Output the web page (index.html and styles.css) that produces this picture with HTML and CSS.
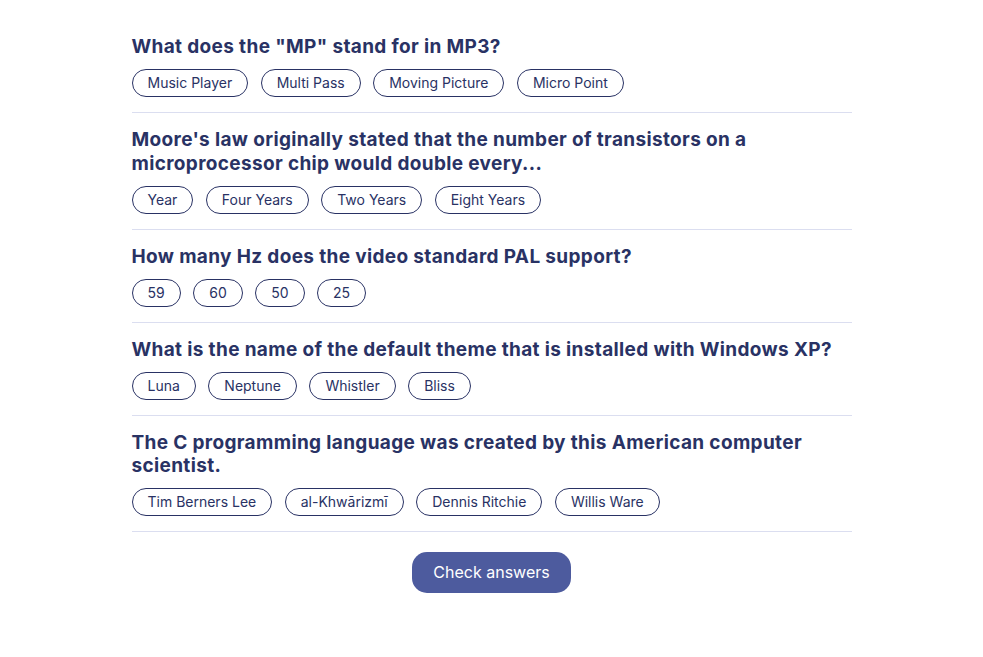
FILE: index.html
```html
<!DOCTYPE html>
<html lang="en">
<head>
<meta charset="utf-8">
<title>Quizzical</title>
<link rel="stylesheet" href="styles.css">
</head>
<body>
<main class="quiz">
  <section class="question">
    <h2 class="question-title">What does the "MP" stand for in MP3?</h2>
    <div class="answers">
      <button class="answer">Music Player</button>
      <button class="answer">Multi Pass</button>
      <button class="answer">Moving Picture</button>
      <button class="answer">Micro Point</button>
    </div>
  </section>
  <section class="question">
    <h2 class="question-title">Moore's law originally stated that the number of transistors on a microprocessor chip would double every...</h2>
    <div class="answers">
      <button class="answer">Year</button>
      <button class="answer">Four Years</button>
      <button class="answer">Two Years</button>
      <button class="answer">Eight Years</button>
    </div>
  </section>
  <section class="question">
    <h2 class="question-title">How many Hz does the video standard PAL support?</h2>
    <div class="answers">
      <button class="answer">59</button>
      <button class="answer">60</button>
      <button class="answer">50</button>
      <button class="answer">25</button>
    </div>
  </section>
  <section class="question">
    <h2 class="question-title">What is the name of the default theme that is installed with Windows XP?</h2>
    <div class="answers">
      <button class="answer">Luna</button>
      <button class="answer">Neptune</button>
      <button class="answer">Whistler</button>
      <button class="answer">Bliss</button>
    </div>
  </section>
  <section class="question">
    <h2 class="question-title">The C programming language was created by this American computer scientist.</h2>
    <div class="answers">
      <button class="answer">Tim Berners Lee</button>
      <button class="answer">al-Khwārizmī</button>
      <button class="answer">Dennis Ritchie</button>
      <button class="answer">Willis Ware</button>
    </div>
  </section>
  <div class="actions">
    <button class="check-btn">Check answers</button>
  </div>
</main>
</body>
</html>
```
FILE: styles.css
```css
* { box-sizing: border-box; }

body {
  margin: 0;
  background: #ffffff;
  color: #293264;
  font-family: "Inter", "Liberation Sans", sans-serif;
}

.quiz {
  width: 720px;
  margin: 0 auto;
  padding-top: 35px;
}

.question {
  padding: 15px 0 15px;
  border-bottom: 1px solid #DBDEF0;
}

.question:first-child {
  padding-top: 0;
}

.question-title {
  margin: 0 0 10.5px;
  font-family: "Inter", sans-serif;
  font-weight: 700;
  font-size: 19px;
  letter-spacing: 0.35px;
  line-height: 23.5px;
  color: #293264;
}

.answers {
  display: flex;
  gap: 12.5px;
}

.answer {
  font-family: "Inter", sans-serif;
  font-size: 14px;
  line-height: 18px;
  color: #293264;
  background: #ffffff;
  border: 1px solid #293264;
  border-radius: 14px;
  padding: 4px 15px;
  cursor: pointer;
}

.actions {
  display: flex;
  justify-content: center;
  padding-top: 20px;
}

.check-btn {
  font-family: "Inter", sans-serif;
  font-size: 16px;
  line-height: 19px;
  color: #ffffff;
  background: #4D5B9E;
  border: none;
  border-radius: 15px;
  padding: 11px 21.5px;
  cursor: pointer;
}
```
